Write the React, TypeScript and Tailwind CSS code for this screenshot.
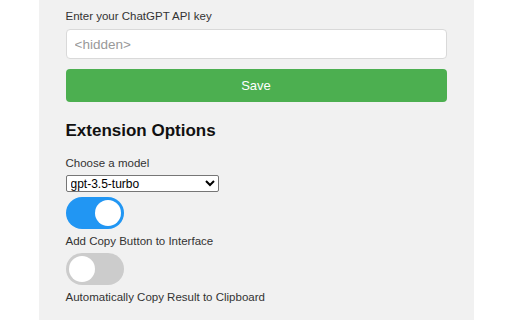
import React, { useState } from "react";

function Toggle({ on }: { on: boolean }) {
  return (
    <div
      className={`w-[58px] h-[32px] rounded-full flex items-center px-[3px] ${
        on ? "bg-[#2196f3] justify-end" : "bg-[#cccccc] justify-start"
      }`}
    >
      <div className="w-[26px] h-[26px] rounded-full bg-white" />
    </div>
  );
}

export default function App() {
  const [model, setModel] = useState("gpt-3.5-turbo");
  return (
    <div
      className="w-[512px] h-[320px] bg-white flex justify-center overflow-hidden"
      style={{ fontFamily: '"Liberation Sans", Arial, sans-serif' }}
    >
      <div className="w-[435px] bg-[#f1f1f1] px-[27px] pt-[8px] h-full">
        <label className="block text-[11.5px] text-[#333] leading-[16px]">
          Enter your ChatGPT API key
        </label>
        <input
          className="mt-[5px] block w-full h-[30px] bg-white border border-[#d9d9d9] rounded-[4px] px-[8px] text-[13.5px] placeholder:text-[#999] outline-none"
          placeholder="<hidden>"
        />
        <button className="mt-[10px] block w-full h-[33px] bg-[#4caf50] rounded-[4px] text-white text-[13px]">
          Save
        </button>
        <h2 className="mt-[19px] text-[17px] font-bold text-[#111] leading-[20px]">
          Extension Options
        </h2>
        <div className="mt-[15px] text-[11.5px] text-[#333] leading-[14px]">Choose a model</div>
        <select
          value={model}
          onChange={(e) => setModel(e.target.value)}
          className="mt-[5px] block w-[153px] h-[17px] text-[12px] bg-white border border-[#767676] rounded-[2px] text-black leading-[15px]"
        >
          <option>gpt-3.5-turbo</option>
          <option>gpt-4</option>
        </select>
        <div className="mt-[5px]">
          <Toggle on={true} />
        </div>
        <div className="mt-[5px] text-[11.5px] text-[#333] leading-[14px]">Add Copy Button to Interface</div>
        <div className="mt-[5px]">
          <Toggle on={false} />
        </div>
        <div className="mt-[5px] text-[11.5px] text-[#333] leading-[14px]">
          Automatically Copy Result to Clipboard
        </div>
      </div>
    </div>
  );
}
